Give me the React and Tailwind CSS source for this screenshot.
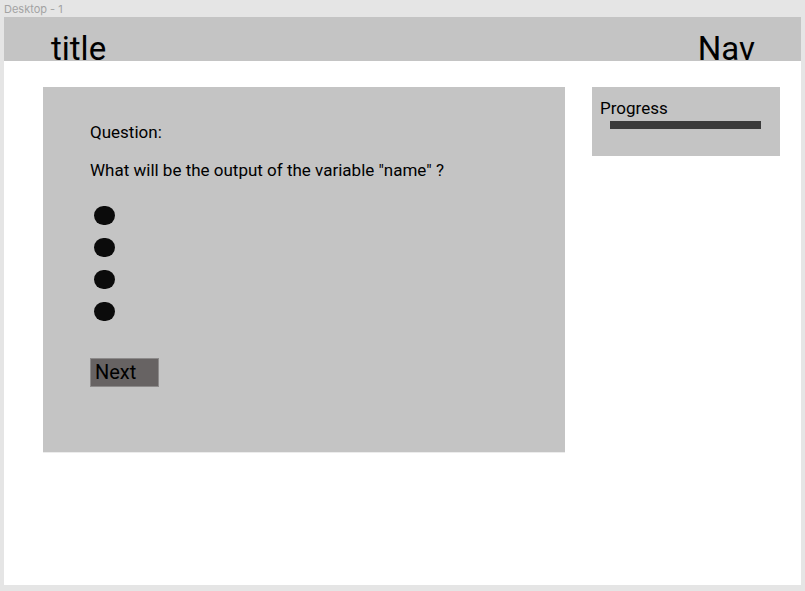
export default function App() {
  return (
    <div className="w-[805px] h-[591px] bg-[#e5e5e5] px-[4px] overflow-hidden" style={{ fontFamily: 'Roboto, sans-serif' }}>
      <div className="h-[17px] text-[11px] leading-[17px] text-[#a3a3a3] pt-[1px]" style={{ fontFamily: 'Inter, sans-serif' }}>
        Desktop - 1
      </div>
      <div className="h-[568px] bg-white flex flex-col">
        {/* header clips the big words at its bottom edge, as in the mockup */}
        <header className="h-[44px] bg-[#c4c4c4] flex justify-between pl-[47px] pr-[46px] pt-[12px] overflow-hidden">
          <span className="text-[33px] leading-[39px] text-black">title</span>
          <span className="text-[33px] leading-[39px] text-black">Nav</span>
        </header>

        <div className="flex items-start gap-[27px] pl-[39px] pt-[26px]">
          <div className="w-[522px] h-[366px] bg-[#c4c4c4] pl-[47px] pt-[35px] border-b border-[#ececec]">
            <p className="text-[17px] leading-[20px] text-black">Question:</p>
            <p className="mt-[18px] text-[17px] leading-[20px] text-black">
              What will be the output of the variable "name" ?
            </p>
            <div className="mt-[26px] flex flex-col gap-[13px] pl-[4px]">
              <span className="block w-[21px] h-[19px] rounded-full bg-[#0b0b0b]" />
              <span className="block w-[21px] h-[19px] rounded-full bg-[#0b0b0b]" />
              <span className="block w-[21px] h-[19px] rounded-full bg-[#0b0b0b]" />
              <span className="block w-[21px] h-[19px] rounded-full bg-[#0b0b0b]" />
            </div>
            <button className="mt-[37px] w-[69px] h-[29px] bg-[#676363] border border-[#8c8a8a] text-left pl-[4px] text-[20px] leading-[27px] text-black">
              Next
            </button>
          </div>

          <div className="w-[188px] h-[69px] bg-[#c4c4c4] pt-[11px]">
            <p className="pl-[8px] text-[17px] leading-[20px] text-black">Progress</p>
            <div className="mt-[3px] ml-[18px] w-[151px] h-[8px] bg-[#3b3b3b]" />
          </div>
        </div>
      </div>
    </div>
  );
}
